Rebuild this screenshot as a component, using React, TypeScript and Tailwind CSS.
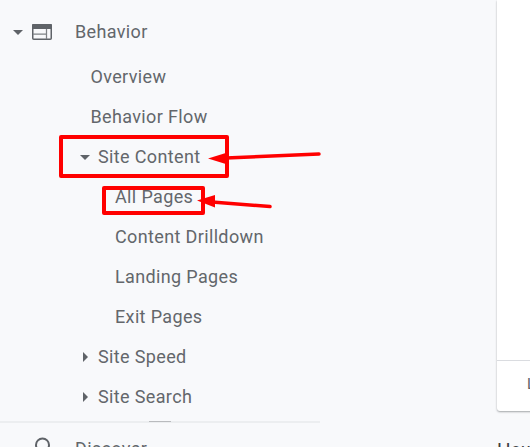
import type { ReactNode } from "react"

const font = "font-['Roboto','Noto_Sans',sans-serif]"
const rowText = "text-[18px] tracking-[0.36px] text-[#63676b]"

function CaretDown() {
  return (
    <svg width="10" height="5" viewBox="0 0 10 5" className="block shrink-0">
      <path d="M0 0h10L5 5z" fill="#5f6368" />
    </svg>
  )
}

function CaretRight() {
  return (
    <svg width="5" height="10" viewBox="0 0 5 10" className="ml-[3px] block shrink-0">
      <path d="M0 0l5 5-5 5z" fill="#5f6368" />
    </svg>
  )
}

function BehaviorIcon() {
  return (
    <svg width="20" height="16" viewBox="0 0 20 16" className="block shrink-0">
      <rect x="0.75" y="0.75" width="18.5" height="14.5" rx="1" fill="none" stroke="#5f6368" strokeWidth="1.5" />
      <rect x="0" y="0" width="20" height="5" rx="1" fill="#5f6368" />
      <path d="M1 10h13M14.5 5v10" stroke="#7d8185" strokeWidth="1.25" fill="none" />
    </svg>
  )
}

function Label({ children }: { children: ReactNode }) {
  return <span className="pb-[2px]">{children}</span>
}

function Row({ indent, children }: { indent: string; children: ReactNode }) {
  return (
    <div className={`flex h-10 items-center ${indent} ${rowText}`}>
      <Label>{children}</Label>
    </div>
  )
}

function CaretRow({ caret, children }: { caret: ReactNode; children: ReactNode }) {
  return (
    <div className={`flex h-10 items-center pl-[80px] ${rowText}`}>
      <span className="flex w-[18px] shrink-0 items-center">{caret}</span>
      <Label>{children}</Label>
    </div>
  )
}

export default function App() {
  return (
    <div className={`relative h-[447px] w-[530px] overflow-hidden bg-[#f8f9fb] ${font}`}>
      <div className="flex">
        <div className="w-[320px] shrink-0 pt-3">
          <div className={`mb-[5px] flex h-10 items-center pl-[13px] ${rowText}`}>
            <CaretDown />
            <span className="ml-[9px] mr-[23px]">
              <BehaviorIcon />
            </span>
            <Label>Behavior</Label>
          </div>
          <Row indent="pl-[90.5px]">Overview</Row>
          <Row indent="pl-[90.5px]">Behavior Flow</Row>
          <CaretRow caret={<CaretDown />}>Site Content</CaretRow>
          <Row indent="pl-[115px]">All Pages</Row>
          <Row indent="pl-[115px]">Content Drilldown</Row>
          <Row indent="pl-[115px]">Landing Pages</Row>
          <Row indent="pl-[115px]">Exit Pages</Row>
          <CaretRow caret={<CaretRight />}>Site Speed</CaretRow>
          <CaretRow caret={<CaretRight />}>Site Search</CaretRow>
          <div className="mt-1 flex h-[2px] bg-[#eceef0]">
            <div className="ml-[149px] h-[1px] w-[22px] bg-[#b9bbbe]" />
          </div>
          <div className={`flex h-10 items-start gap-[22px] pl-[33px] pt-[14px] ${rowText}`}>
            <svg width="20" height="20" viewBox="0 0 20 20" className="shrink-0">
              <circle cx="9.5" cy="8" r="6.5" fill="none" stroke="#5f6368" strokeWidth="2" />
              <path d="M14 12.5L19 18" stroke="#5f6368" strokeWidth="2" />
            </svg>
            <span className="leading-6">Discover</span>
          </div>
        </div>
        <div className="ml-[177px] w-[60px] shrink-0">
          <div className="h-[411px] rounded-bl-[3px] bg-white shadow-[0_1px_2px_rgba(60,64,67,0.45)]">
            <div className="h-[361px] border-b border-[#dadce0]" />
            <div className="pl-[30px] pt-[13px] text-[15px] leading-5 text-[#5f6368]">L</div>
          </div>
          <div className="mt-[27px] text-[19px] leading-6 text-[#3c4043]">How</div>
        </div>
      </div>

      {/* annotations drawn over the screenshot */}
      <div className="absolute left-[59px] top-[135px] h-[43px] w-[170px] rounded-[2px] border-[4px] border-[#ff0000]" />
      <div className="absolute left-[102px] top-[186px] h-[29px] w-[103px] rounded-[2px] border-[4px] border-[#ff0000]" />
      <svg width="530" height="447" viewBox="0 0 530 447" className="pointer-events-none absolute left-0 top-0">
        <path d="M226 158L319 154" stroke="#ff0000" strokeWidth="3.5" strokeLinecap="round" />
        <path d="M208 158.5L229 152v13z" fill="#ff0000" />
        <path d="M212 202L270 206.5" stroke="#ff0000" strokeWidth="3.5" strokeLinecap="round" />
        <path d="M197 200.5L215 195v12.5z" fill="#ff0000" />
      </svg>
    </div>
  )
}
